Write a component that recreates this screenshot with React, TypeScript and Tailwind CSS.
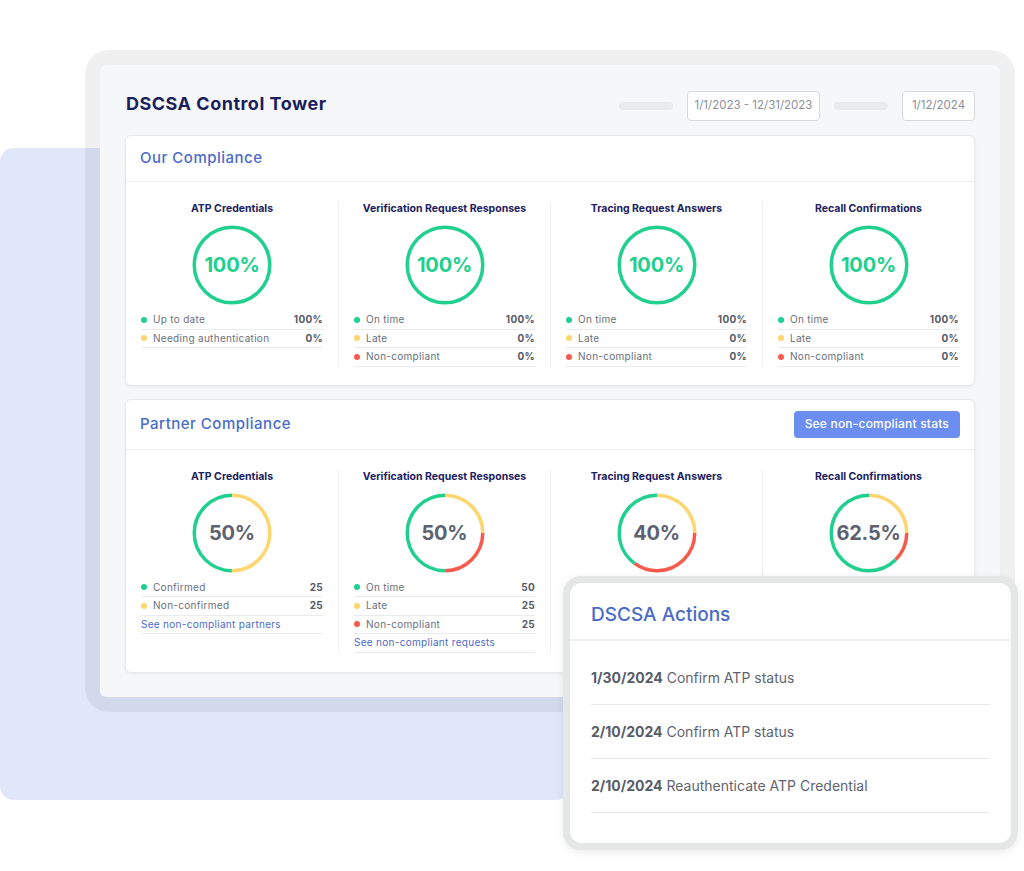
import React from "react";

const GREEN = "#21cf8e";
const YELLOW = "#fdd66f";
const RED = "#f65a4c";

type Seg = { color: string; frac: number };

function Donut({ segs, label, color }: { segs: Seg[]; label: string; color: string }) {
  const r = 37.75;
  const C = 2 * Math.PI * r;
  let acc = 0;
  return (
    <div className="relative w-[80px] h-[80px] mx-auto">
      <svg width="80" height="80" viewBox="0 0 80 80" className="block">
        <g transform="rotate(-90 40 40)">
          {segs.map((s, i) => {
            const off = acc;
            acc += s.frac;
            return (
              <circle
                key={i}
                cx="40"
                cy="40"
                r={r}
                fill="none"
                stroke={s.color}
                strokeWidth="3.5"
                strokeDasharray={`${s.frac * C} ${C}`}
                strokeDashoffset={-off * C}
              />
            );
          })}
        </g>
      </svg>
      <div
        className="absolute inset-0 flex items-center justify-center text-[20px] font-bold tracking-[-0.2px]"
        style={{ color }}
      >
        {label}
      </div>
    </div>
  );
}

type Row = { color: string; label: string; value: string };

function Column({
  title,
  segs,
  label,
  labelColor,
  rows,
  link,
  first,
  hidden,
}: {
  title: string;
  segs: Seg[];
  label: string;
  labelColor: string;
  rows: Row[];
  link?: string;
  first?: boolean;
  hidden?: boolean;
}) {
  return (
    <div className={`px-[15px] ${first ? "" : "border-l border-[#eceef1]"}`}>
      <div className="text-center text-[10.5px] font-bold text-[#1c2160] leading-[14px]">{title}</div>
      <div className="mt-[9px]">
        <Donut segs={segs} label={label} color={labelColor} />
      </div>
      <div className={`mt-[6px] ${hidden ? "invisible" : ""}`}>
        {rows.map((r, i) => (
          <div
            key={i}
            className="flex items-center h-[18.5px] border-b border-[#e9ebee] text-[10px] tracking-[0.3px] text-[#6a6f7b]"
          >
            <span className="w-[6px] h-[6px] rounded-full mr-[6px]" style={{ background: r.color }} />
            <span className="flex-1">{r.label}</span>
            <span className="font-bold text-[#555a66]">{r.value}</span>
          </div>
        ))}
        {link && (
          <div className="flex items-center h-[18.5px] border-b border-[#e9ebee] text-[10px] tracking-[0.3px] text-[#4a6bc9]">
            {link}
          </div>
        )}
      </div>
    </div>
  );
}

const full: Seg[] = [{ color: GREEN, frac: 1 }];

export default function App() {
  return (
    <div
      className="relative w-[1024px] h-[871px] bg-white overflow-hidden"
      style={{ fontFamily: "Inter, 'Noto Sans', sans-serif" }}
    >
      {/* blue backdrop */}
      <div className="absolute left-0 top-[148px] w-[570px] h-[652px] rounded-[14px] bg-[#e0e7f9]" />

      {/* tablet */}
      <div className="absolute left-[85px] top-[50px] w-[930px] h-[662px] rounded-[24px] bg-black/[0.06] p-[15px]">
        <div className="w-full h-full rounded-[6px] bg-[#f5f7f9] px-[25px] pt-[26px]">
          {/* header */}
          <div className="flex items-center h-[30px]">
            <div className="pl-[1px] pb-[6px] text-[18px] font-bold text-[#1b1f5c] tracking-[0.5px]">
              DSCSA Control Tower
            </div>
            <div className="ml-auto flex items-center gap-[14px]">
              <div className="w-[54px] h-[8px] rounded-full bg-[#e8eaed]" />
              <div className="h-[30px] w-[133px] flex items-center justify-center rounded-[4px] border border-[#d6d9dd] bg-white text-[11.5px] text-[#8b909a]">
                1/1/2023 - 12/31/2023
              </div>
              <div className="w-[54px] h-[8px] rounded-full bg-[#e8eaed]" />
              <div className="h-[30px] w-[73px] flex items-center justify-center rounded-[4px] border border-[#d6d9dd] bg-white text-[11.5px] text-[#8b909a]">
                1/12/2024
              </div>
            </div>
          </div>

          {/* Our compliance */}
          <div className="mt-[14px] rounded-[6px] bg-white border border-[#e7e9ec] shadow-[0_1px_3px_rgba(0,0,0,0.06)]">
            <div className="h-[46px] flex items-center px-[14px] border-b border-[#eceef1]">
              <div className="text-[15px] font-medium tracking-[0.5px] text-[#4a6bc9]">Our Compliance</div>
            </div>
            <div className="grid grid-cols-4 pt-[20px] pb-[18px]">
              <Column
                first
                title="ATP Credentials"
                segs={full}
                label="100%"
                labelColor={GREEN}
                rows={[
                  { color: GREEN, label: "Up to date", value: "100%" },
                  { color: YELLOW, label: "Needing authentication", value: "0%" },
                ]}
              />
              <Column
                title="Verification Request Responses"
                segs={full}
                label="100%"
                labelColor={GREEN}
                rows={[
                  { color: GREEN, label: "On time", value: "100%" },
                  { color: YELLOW, label: "Late", value: "0%" },
                  { color: RED, label: "Non-compliant", value: "0%" },
                ]}
              />
              <Column
                title="Tracing Request Answers"
                segs={full}
                label="100%"
                labelColor={GREEN}
                rows={[
                  { color: GREEN, label: "On time", value: "100%" },
                  { color: YELLOW, label: "Late", value: "0%" },
                  { color: RED, label: "Non-compliant", value: "0%" },
                ]}
              />
              <Column
                title="Recall Confirmations"
                segs={full}
                label="100%"
                labelColor={GREEN}
                rows={[
                  { color: GREEN, label: "On time", value: "100%" },
                  { color: YELLOW, label: "Late", value: "0%" },
                  { color: RED, label: "Non-compliant", value: "0%" },
                ]}
              />
            </div>
          </div>

          {/* Partner compliance */}
          <div className="mt-[13px] rounded-[6px] bg-white border border-[#e7e9ec] shadow-[0_1px_3px_rgba(0,0,0,0.06)]">
            <div className="h-[50px] flex items-center px-[14px] border-b border-[#eceef1]">
              <div className="text-[15px] font-medium tracking-[0.5px] text-[#4a6bc9]">Partner Compliance</div>
              <div className="ml-auto h-[27px] px-[11px] flex items-center rounded-[4px] bg-[#6b8ef0] text-white text-[12px] font-medium tracking-[0.2px]">
                See non-compliant stats
              </div>
            </div>
            <div className="grid grid-cols-4 pt-[20px] pb-[19px]">
              <Column
                first
                title="ATP Credentials"
                segs={[
                  { color: YELLOW, frac: 0.5 },
                  { color: GREEN, frac: 0.5 },
                ]}
                label="50%"
                labelColor="#5d6270"
                rows={[
                  { color: GREEN, label: "Confirmed", value: "25" },
                  { color: YELLOW, label: "Non-confirmed", value: "25" },
                ]}
                link="See non-compliant partners"
              />
              <Column
                title="Verification Request Responses"
                segs={[
                  { color: YELLOW, frac: 0.25 },
                  { color: RED, frac: 0.25 },
                  { color: GREEN, frac: 0.5 },
                ]}
                label="50%"
                labelColor="#5d6270"
                rows={[
                  { color: GREEN, label: "On time", value: "50" },
                  { color: YELLOW, label: "Late", value: "25" },
                  { color: RED, label: "Non-compliant", value: "25" },
                ]}
                link="See non-compliant requests"
              />
              <Column
                hidden
                title="Tracing Request Answers"
                segs={[
                  { color: YELLOW, frac: 0.25 },
                  { color: RED, frac: 0.35 },
                  { color: GREEN, frac: 0.4 },
                ]}
                label="40%"
                labelColor="#5d6270"
                rows={[
                  { color: GREEN, label: "On time", value: "40" },
                  { color: YELLOW, label: "Late", value: "25" },
                  { color: RED, label: "Non-compliant", value: "35" },
                ]}
                link="See non-compliant requests"
              />
              <Column
                hidden
                title="Recall Confirmations"
                segs={[
                  { color: YELLOW, frac: 0.25 },
                  { color: RED, frac: 0.125 },
                  { color: GREEN, frac: 0.625 },
                ]}
                label="62.5%"
                labelColor="#5d6270"
                rows={[
                  { color: GREEN, label: "On time", value: "5" },
                  { color: YELLOW, label: "Late", value: "2" },
                  { color: RED, label: "Non-compliant", value: "1" },
                ]}
                link="See non-compliant requests"
              />
            </div>
          </div>
        </div>
      </div>

      {/* actions card */}
      <div className="absolute left-[563px] top-[576px] w-[455px] h-[274px] rounded-[18px] bg-[#e5e6e6] p-[7px] shadow-[0_2px_8px_rgba(0,0,0,0.08)]">
        <div className="w-full h-full rounded-[12px] bg-white">
          <div className="h-[58px] flex items-center pt-[8px] px-[21px] border-b-2 border-[#eef0f2]">
            <div className="text-[19px] font-medium text-[#4a6bc9]">DSCSA Actions</div>
          </div>
          <div className="px-[21px] pt-[10px]">
            {[
              ["1/30/2024", "Confirm ATP status"],
              ["2/10/2024", "Confirm ATP status"],
              ["2/10/2024", "Reauthenticate ATP Credential"],
            ].map(([d, t], i) => (
              <div key={i} className="h-[54px] flex items-center border-b border-[#e6e8eb] text-[14px] text-[#5f6470]">
                <span className="font-bold text-[#575c68] mr-[4px]">{d}</span>
                <span>{t}</span>
              </div>
            ))}
          </div>
        </div>
      </div>
    </div>
  );
}
